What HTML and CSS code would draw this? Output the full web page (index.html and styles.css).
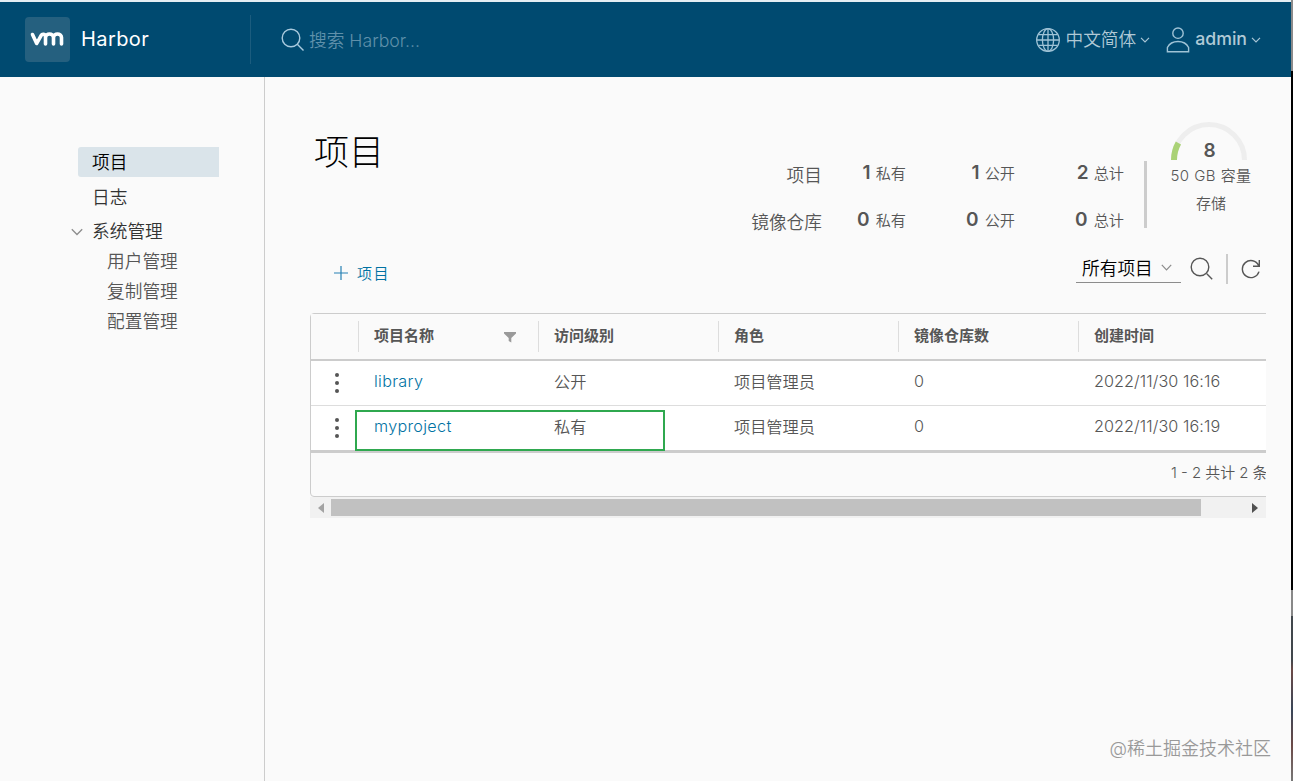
FILE: index.html
```html
<!DOCTYPE html>
<html lang="zh-CN">
<head>
    <meta charset="UTF-8">
    <meta name="viewport" content="width=device-width, initial-scale=1.0">
    <title>Harbor</title>
    <link rel="stylesheet" href="styles.css">
</head>
<body>
    <div class="app">
        <header class="header">
            <div class="branding">
                <span class="logo">
                    <svg width="34" height="16" viewBox="0 0 34 16" fill="none" stroke="#fff" stroke-width="3.6" stroke-linecap="round" stroke-linejoin="round">
                        <path d="M2.5 3.5l4.2 9 4.5-8.2c.8-1.5 4.3-1.8 4.3 1.5V13M15.5 6.5c0-4.6 8-4.6 8 0V13M23.5 6.5c0-4.6 8-4.6 8 0V13"/>
                    </svg>
                </span>
                <span class="title">Harbor</span>
            </div>
            <div class="search">
                <svg width="24" height="24" viewBox="0 0 24 24" fill="none" stroke="#a9cade" stroke-width="1.4">
                    <circle cx="10" cy="10" r="8.8"/>
                    <path d="M16.3 16.3l6.2 6.2"/>
                </svg>
                <span class="search-text">搜索 Harbor...</span>
            </div>
            <div class="actions">
                <div class="action lang">
                    <svg width="26" height="26" viewBox="0 0 26 26" fill="none" stroke="#9fc3d6" stroke-width="1.3">
                        <circle cx="13" cy="13" r="11.3"/>
                        <ellipse cx="13" cy="13" rx="5.6" ry="11.3"/>
                        <path d="M13 1.7v22.6M1.7 13h22.6M3.5 7.7h19M3.5 18.3h19"/>
                    </svg>
                    <span>中文简体</span>
                    <svg class="caret" width="10" height="6" viewBox="0 0 10 6" fill="none" stroke="#a9c6d6" stroke-width="1.2"><path d="M1 .8l4 4 4-4"/></svg>
                </div>
                <div class="action user">
                    <svg width="24" height="26" viewBox="0 0 24 26" fill="none" stroke="#9fc3d6" stroke-width="1.4">
                        <circle cx="12" cy="6.2" r="5.2"/>
                        <path d="M1.4 24.8v-4.3c2-4 6-6 10.6-6s8.6 2 10.6 6v4.3z"/>
                    </svg>
                    <span class="name">admin</span>
                    <svg class="caret" width="10" height="6" viewBox="0 0 10 6" fill="none" stroke="#a9c6d6" stroke-width="1.2"><path d="M1 .8l4 4 4-4"/></svg>
                </div>
            </div>
        </header>

        <div class="content">
            <nav class="sidenav">
                <a class="nav-link active">项目</a>
                <a class="nav-link">日志</a>
                <div class="nav-group">
                    <svg width="12" height="8" viewBox="0 0 12 8" fill="none" stroke="#8c8c8c" stroke-width="1.3"><path d="M.8 1.2L6 6.5l5.2-5.3"/></svg>
                    <span>系统管理</span>
                </div>
                <a class="nav-sub">用户管理</a>
                <a class="nav-sub">复制管理</a>
                <a class="nav-sub">配置管理</a>
            </nav>

            <main class="main">
                <div class="page-head">
                    <h1>项目</h1>
                    <div class="stats">
                        <div class="stat-grid">
                            <span class="stat-label">项目</span>
                            <span class="stat"><b>1</b>私有</span>
                            <span class="stat"><b>1</b>公开</span>
                            <span class="stat"><b>2</b>总计</span>
                            <span class="stat-label">镜像仓库</span>
                            <span class="stat"><b class="zero">0</b>私有</span>
                            <span class="stat"><b class="zero">0</b>公开</span>
                            <span class="stat"><b class="zero">0</b>总计</span>
                        </div>
                        <div class="stat-divider"></div>
                        <div class="gauge">
                            <svg width="76" height="38" viewBox="0 0 76 38" fill="none" stroke-width="5">
                                <path d="M2.5 38a35.5 35.5 0 0 1 71 0" stroke="#eee"/>
                                <path d="M3 38a35 35 0 0 1 4.400-17" stroke="#aad276" stroke-width="6"/>
                            </svg>
                            <b class="gauge-value">8</b>
                            <span class="gauge-cap">50 GB 容量</span>
                            <span class="gauge-name">存储</span>
                        </div>
                    </div>
                </div>

                <div class="toolbar">
                    <a class="btn-new">
                        <svg width="14" height="14" viewBox="0 0 14 14" stroke="#2680b3" stroke-width="1.2"><path d="M7 0v14M0 7h14"/></svg>
                        <span>项目</span>
                    </a>
                    <div class="filters">
                        <div class="select">
                            <span>所有项目</span>
                            <svg width="11" height="7" viewBox="0 0 11 7" fill="none" stroke="#8c8c8c" stroke-width="1.2"><path d="M.8.8l4.700 5 4.700-5"/></svg>
                        </div>
                        <svg class="find" width="24" height="24" viewBox="0 0 24 24" fill="none" stroke="#565656" stroke-width="1.4">
                            <circle cx="10" cy="10" r="8.8"/>
                            <path d="M16.8 16.8l5.400 5.400"/>
                        </svg>
                        <span class="bar"></span>
                        <svg class="refresh" width="20" height="20" viewBox="0 0 20 20" fill="none" stroke="#565656" stroke-width="1.4">
                            <path d="M18 12.6A8.5 8.5 0 1 1 17.600 6.5M18.300 1v6.300H12"/>
                        </svg>
                    </div>
                </div>

                <div class="grid-wrap">
                    <div class="datagrid">
                        <div class="row head">
                            <div class="cell menu"></div>
                            <div class="cell">项目名称
                                <svg width="12" height="11" viewBox="0 0 12 11" fill="#9a9a9a"><path d="M0 0h12v1.500L7.300 6v4.500L4.700 9V6L0 1.500z"/></svg>
                            </div>
                            <div class="cell">访问级别</div>
                            <div class="cell">角色</div>
                            <div class="cell">镜像仓库数</div>
                            <div class="cell">创建时间</div>
                        </div>
                        <div class="row">
                            <div class="cell menu"><i></i><i></i><i></i></div>
                            <div class="cell"><a>library</a></div>
                            <div class="cell">公开</div>
                            <div class="cell">项目管理员</div>
                            <div class="cell zero">0</div>
                            <div class="cell date">2022/11/30 16:16</div>
                        </div>
                        <div class="row">
                            <div class="cell menu"><i></i><i></i><i></i></div>
                            <div class="cell"><a>myproject</a></div>
                            <div class="cell">私有</div>
                            <div class="cell">项目管理员</div>
                            <div class="cell zero">0</div>
                            <div class="cell date">2022/11/30 16:19</div>
                            <div class="marker"></div>
                        </div>
                        <div class="grid-foot"><span>1 - 2 共计 2 条</span></div>
                    </div>
                    <div class="scrollbar">
                        <svg width="6" height="10" viewBox="0 0 6 10" fill="#a3a3a3"><path d="M6 0v10L0 5z"/></svg>
                        <span class="thumb"></span>
                        <svg class="right" width="6" height="10" viewBox="0 0 6 10" fill="#505050"><path d="M0 0v10l6-5z"/></svg>
                    </div>
                </div>
            </main>
        </div>
    </div>
    <div class="edge"></div>
    <div class="watermark">@稀土掘金技术社区</div>
</body>
</html>
```

FILE: styles.css
```css
* {
    box-sizing: border-box;
}
body {
    margin: 0;
    display: flex;
    height: 781px;
    overflow: hidden;
    background: #fafafa;
    color: #565656;
    font-family: Inter, "Noto Sans CJK SC", sans-serif;
    font-size: 16.2px;
    font-weight: 350;
}
svg {
    flex: none;
    display: block;
}
.app {
    width: 1291px;
    display: flex;
    flex-direction: column;
    border-top: 2px solid #e4eef3;
}
.edge {
    width: 2px;
    background: linear-gradient(#8b8b8b 71px, #000 71px, #000 590px, #888 590px, #888 616px, #41474c 616px, #41474c 660px, #6b4a47 670px, #3a4658 710px, #6b4a47 745px, #777 781px);
}

/* header */
.header {
    height: 75px;
    display: flex;
    align-items: center;
    background: #004a70;
    color: #fff;
}
.branding {
    width: 251px;
    height: 49px;
    padding-left: 25px;
    display: flex;
    align-items: center;
    border-right: 1px solid #1b5c7e;
}
.logo {
    width: 45px;
    height: 45px;
    display: flex;
    align-items: center;
    justify-content: center;
    background: #25607f;
    border-radius: 4px;
}
.logo svg {
    margin: 0 1px 1px 0;
}
.title {
    margin-left: 11px;
    padding-bottom: 2px;
    font-size: 20px;
    font-weight: 400;
    letter-spacing: 0.4px;
}
.search {
    flex: 1;
    display: flex;
    align-items: center;
    padding-left: 30px;
    gap: 4px;
}
.search-text {
    padding-bottom: 2px;
    font-size: 17.7px;
    color: #5f90aa;
}
.actions {
    display: flex;
    padding-right: 30px;
    gap: 16px;
    color: #b0c9d6;
    font-size: 17.7px;
}
.action {
    display: flex;
    align-items: center;
}
.action span {
    margin: 0 4px;
    padding-bottom: 3px;
}
.action .name {
    margin-left: 5px;
    padding-bottom: 2px;
    font-size: 17.7px;
    font-weight: 500;
}

/* side navigation */
.content {
    flex: 1;
    display: flex;
}
.sidenav {
    width: 265px;
    padding: 70px 45px 0 70px;
    border-right: 1px solid #ccc;
    font-size: 17.7px;
}
.nav-link {
    display: flex;
    align-items: center;
    height: 30px;
    margin: 0 0 5px 8px;
    padding: 0 0 3px 14px;
    color: #333;
}
.nav-link.active {
    background: #dae4ea;
    border-radius: 3px 0 0 3px;
    color: #000;
}
.nav-group {
    display: flex;
    align-items: center;
    height: 30px;
    gap: 9px;
    color: #333;
}
.nav-group svg {
    margin-left: 1px;
}
.nav-group span {
    padding-bottom: 4px;
}
.nav-sub {
    display: flex;
    align-items: center;
    height: 30px;
    padding: 0 0 4px 37px;
}

/* main area */
.main {
    flex: 1;
    min-width: 0;
    padding: 45px 25px 0 45px;
}
.page-head {
    display: flex;
    justify-content: space-between;
    height: 132px;
}
h1 {
    margin: 6px 0 0 4px;
    font-size: 35px;
    line-height: 48px;
    font-weight: 300;
    color: #000;
}
.stats {
    display: flex;
}
.stat-grid {
    display: grid;
    grid-template-columns: 90px 84px 109px 109px;
    grid-auto-rows: 47px;
    justify-items: end;
    align-items: center;
    height: 94px;
    margin: 27px 19px 0 0;
}
.stat-label {
    font-size: 17.7px;
    padding-top: 3px;
    margin-right: 1px;
}
.stat {
    font-size: 15.2px;
    margin-right: 1px;
}
.stat b {
    margin-right: 5px;
    font-size: 19px;
    font-weight: 600;
}
.stat b.zero {
    letter-spacing: 1px;
}
.stat-divider {
    width: 3px;
    height: 67px;
    margin-top: 39px;
    background: #ccc;
}
.gauge {
    width: 119px;
    display: flex;
    flex-direction: column;
    align-items: center;
    padding-left: 9px;
}
.gauge svg {
    margin-right: 4px;
}
.gauge-value {
    margin: -21px 3px 0 0;
    font-size: 19px;
    line-height: 24px;
    font-weight: 600;
}
.gauge-cap,
.gauge-name {
    font-size: 15px;
    line-height: 28px;
}
.gauge-cap {
    margin-top: -1px;
    letter-spacing: 0.45px;
}
.toolbar {
    display: flex;
    justify-content: space-between;
    align-items: center;
    height: 30px;
}
.btn-new {
    display: flex;
    align-items: center;
    gap: 9px;
    padding: 7px 0 0 24px;
    color: #0072a3;
    font-size: 15px;
    letter-spacing: 1.5px;
}
.filters {
    display: flex;
    align-items: center;
}
.select {
    width: 105px;
    height: 30px;
    display: flex;
    align-items: center;
    gap: 8px;
    padding-left: 6px;
    margin-bottom: 2px;
    border-bottom: 1px solid #8c8c8c;
    font-size: 17.7px;
    color: #000;
}
.select span {
    padding-bottom: 1px;
}
.find {
    margin-left: 9px;
}
.bar {
    width: 2px;
    height: 30px;
    margin: 0 13px 0 12px;
    background: #ccc;
}
.refresh {
    margin-right: 5px;
}

/* project list */
.grid-wrap {
    margin-top: 29px;
    overflow: hidden;
}
.datagrid {
    width: 1100px;
    border: 1px solid #ccc;
    border-radius: 4px;
}
.row {
    position: relative;
    display: flex;
    height: 44px;
    padding-bottom: 4px;
    background: #fff;
}
.row + .row + .row {
    height: 45px;
    border-top: 1px solid #ddd;
}
.row.head {
    height: 47px;
    padding: 7px 0;
    background: #fafafa;
    border-bottom: 2px solid #ccc;
    font-size: 15px;
    font-weight: 700;
}
.cell {
    width: 180px;
    padding-left: 15px;
    display: flex;
    align-items: center;
}
.row:not(.head) .cell {
    padding-left: 16px;
}
.head .cell {
    justify-content: space-between;
    padding-right: 22px;
    padding-bottom: 5px;
    border-left: 1px solid #ddd;
}
.head svg {
    margin-top: 6px;
}
.cell.menu,
.row:not(.head) .cell.menu {
    width: 47px;
    padding: 3px 0 0 4px;
    flex-direction: column;
    justify-content: center;
    gap: 4px;
    border-left: 0;
}
.menu i {
    width: 4px;
    height: 4px;
    border-radius: 50%;
    background: #555;
}
.cell a {
    color: #0072a3;
    letter-spacing: 0.3px;
}
.cell.date {
    letter-spacing: 0.08px;
}
.marker {
    position: absolute;
    left: 44px;
    top: 4px;
    width: 310px;
    height: 41px;
    border: 2px solid #2fa84f;
    z-index: 1;
}
.grid-foot {
    height: 46px;
    padding: 0 0 6px 860px;
    display: flex;
    align-items: center;
    border-top: 3px solid #ccc;
    font-size: 14.9px;
}
.scrollbar {
    display: flex;
    align-items: center;
    height: 21px;
    padding: 0 8px;
    background: #f1f1f1;
}
.thumb {
    width: 870px;
    height: 17px;
    margin-left: 7px;
    background: #c1c1c1;
}
.scrollbar .right {
    margin-left: auto;
}

.watermark {
    position: absolute;
    right: 22px;
    bottom: 18px;
    font-size: 18px;
    line-height: 28px;
    color: #999;
}
```
